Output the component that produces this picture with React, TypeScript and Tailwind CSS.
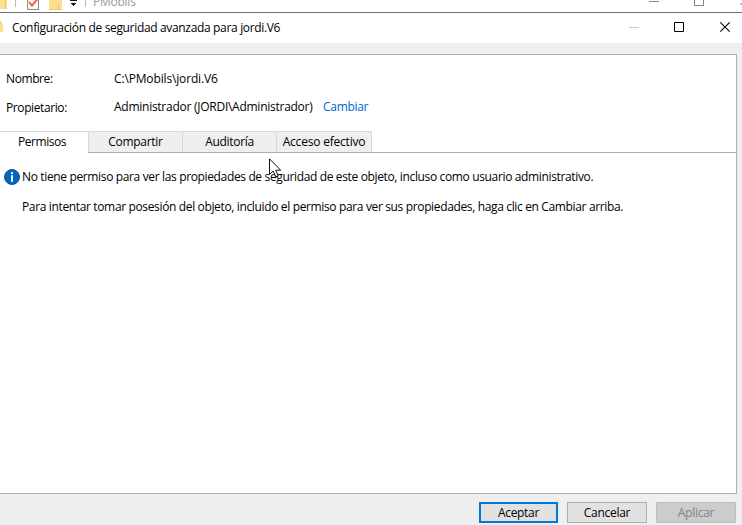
import React from "react";

function TopStrip() {
  return (
    <div className="relative h-[12px] w-full overflow-hidden bg-white">
      <svg width="742" height="12" viewBox="0 0 742 12" className="block" shapeRendering="crispEdges">
        <path d="M0 0H7V9H0Z" fill="#fbe092" />
        <path d="M5 0H6V9H5Z" fill="#f3ca63" />
        <path d="M15 0H16V7H15ZM85 0H86V7H85Z" fill="#b9b9b9" />
        <path d="M27.5 -3V9.5H38.5V-3" fill="#f7f7f7" stroke="#8c8c8c" />
        <path d="M29 2l3 3.5L37.5 -1" fill="none" stroke="#ec5b2f" strokeWidth="1.8" shapeRendering="auto" />
        <path d="M49 0H62V9H49Z" fill="#fbe092" />
        <path d="M49 9H62V10H49ZM58 4H59V9H58Z" fill="#f0c763" />
        <path d="M70 0H77V1H70ZM71 3H76V4H71ZM72 4H75V5H72ZM73 5H74V6H73Z" fill="#111" />
        <path d="M649 1H659V2H649Z" fill="#858585" />
        <path d="M694.5 -3V5.5H703.5V-3" fill="none" stroke="#858585" />
        <path d="M740 5l3-3" stroke="#858585" />
      </svg>
      <span className="absolute left-[93px] top-[-5px] text-[12px] leading-[14px] tracking-[-0.25px] text-[#999]">PMobils</span>
    </div>
  );
}

function TitleBar() {
  return (
    <header className="flex h-[31px] items-center border-t border-[#6f6f6f] bg-white">
      <svg width="3" height="30" className="shrink-0" shapeRendering="crispEdges">
        <path d="M0 8H2V12H3V19H0Z" fill="#fcdc86" />
      </svg>
      <h1 className="ml-[9px] grow whitespace-nowrap text-[12px] leading-4 tracking-[-0.335px]">Configuración de seguridad avanzada para jordi.V6</h1>
      <svg width="113" height="30" viewBox="629 13 113 30" className="shrink-0" fill="none">
        <path d="M629 27.5H639" stroke="#cccccc" />
        <path d="M674.5 22.5H683.5V31.5H674.5Z" stroke="#000" />
        <path d="M720.3 22.3L729.7 31.7M729.7 22.3L720.3 31.7" stroke="#000" strokeWidth="1.1" />
      </svg>
    </header>
  );
}

function InfoIcon() {
  return (
    <svg width="16" height="16" viewBox="0 0 16 16" className="shrink-0">
      <circle cx="8" cy="8" r="7.5" fill="#0067c0" stroke="#17528c" />
      <path d="M7 3.2H9V5H7ZM7 6.3H9V12.7H7Z" fill="#fff" />
    </svg>
  );
}

function Pointer() {
  return (
    <svg width="13" height="20" viewBox="0 0 13 20" className="absolute left-[269px] top-[103px]">
      <path d="M0.5 0.8V16.5L4.2 13L6.8 18.8L9.2 17.8L6.7 12.2H11.7Z" fill="#fff" stroke="#111" />
    </svg>
  );
}

export default function App() {
  return (
    <div className="flex h-[525px] w-[742px] flex-col overflow-hidden bg-[#efefef] font-['Open_Sans','Noto_Sans',sans-serif] text-[12px] leading-4 tracking-[-0.3px] text-black">
      <TopStrip />
      <TitleBar />
      <main className="relative mt-[11px] flex h-[440px] w-[737px] flex-col border-y border-r border-[#b0b0b0] bg-white">
        <dl className="grid h-[76px] grid-cols-[108px_1fr] content-start gap-y-[13px] whitespace-nowrap pl-1.5 pt-4">
          <dt className="tracking-[-0.4px]">Nombre:</dt>
          <dd className="tracking-[-0.15px]">C:\PMobils\jordi.V6</dd>
          <dt className="tracking-[-0.4px]">Propietario:</dt>
          <dd className="-mt-px flex">
            <span className="w-[209px] tracking-[-0.26px]">Administrador (JORDI\Administrador)</span>
            <a className="text-[#0066cc]">Cambiar</a>
          </dd>
        </dl>
        <nav className="flex h-[22px] whitespace-nowrap text-center leading-5">
          <div className="w-[88px] border-t border-[#d9d9d9] pr-1 tracking-[-0.45px]">Permisos</div>
          <div className="w-[95px] border border-[#d9d9d9] border-b-[#acacac] bg-[#efefef]">Compartir</div>
          <div className="w-[93px] border-y border-t-[#d9d9d9] border-b-[#acacac] bg-[#efefef]">Auditoría</div>
          <div className="w-[96px] border border-[#d9d9d9] border-b-[#acacac] bg-[#efefef] tracking-[-0.2px]">Acceso efectivo</div>
          <div className="grow border-b border-[#acacac]" />
        </nav>
        <section className="flex gap-[2px] whitespace-nowrap pl-1 pt-4">
          <InfoIcon />
          <div className="flex flex-col gap-[14px] tracking-[-0.355px]">
            <p>No tiene permiso para ver las propiedades de seguridad de este objeto, incluso como usuario administrativo.</p>
            <p>Para intentar tomar posesión del objeto, incluido el permiso para ver sus propiedades, haga clic en Cambiar arriba.</p>
          </div>
        </section>
        <Pointer />
      </main>
      <footer className="flex justify-end gap-[9px] pr-1.5 pt-2">
        <button className="h-[21px] w-[79px] border-2 border-[#0078d7] bg-[#e1e1e1] leading-[17px] tracking-[-0.3px]">Aceptar</button>
        <button className="h-[21px] w-[80px] border border-[#adadad] bg-[#e1e1e1] leading-[19px] tracking-[-0.3px]">Cancelar</button>
        <button disabled className="h-[21px] w-[80px] border border-[#bfbfbf] bg-[#cccccc] leading-[19px] tracking-[-0.25px] text-[#838383]">Aplicar</button>
      </footer>
    </div>
  );
}
